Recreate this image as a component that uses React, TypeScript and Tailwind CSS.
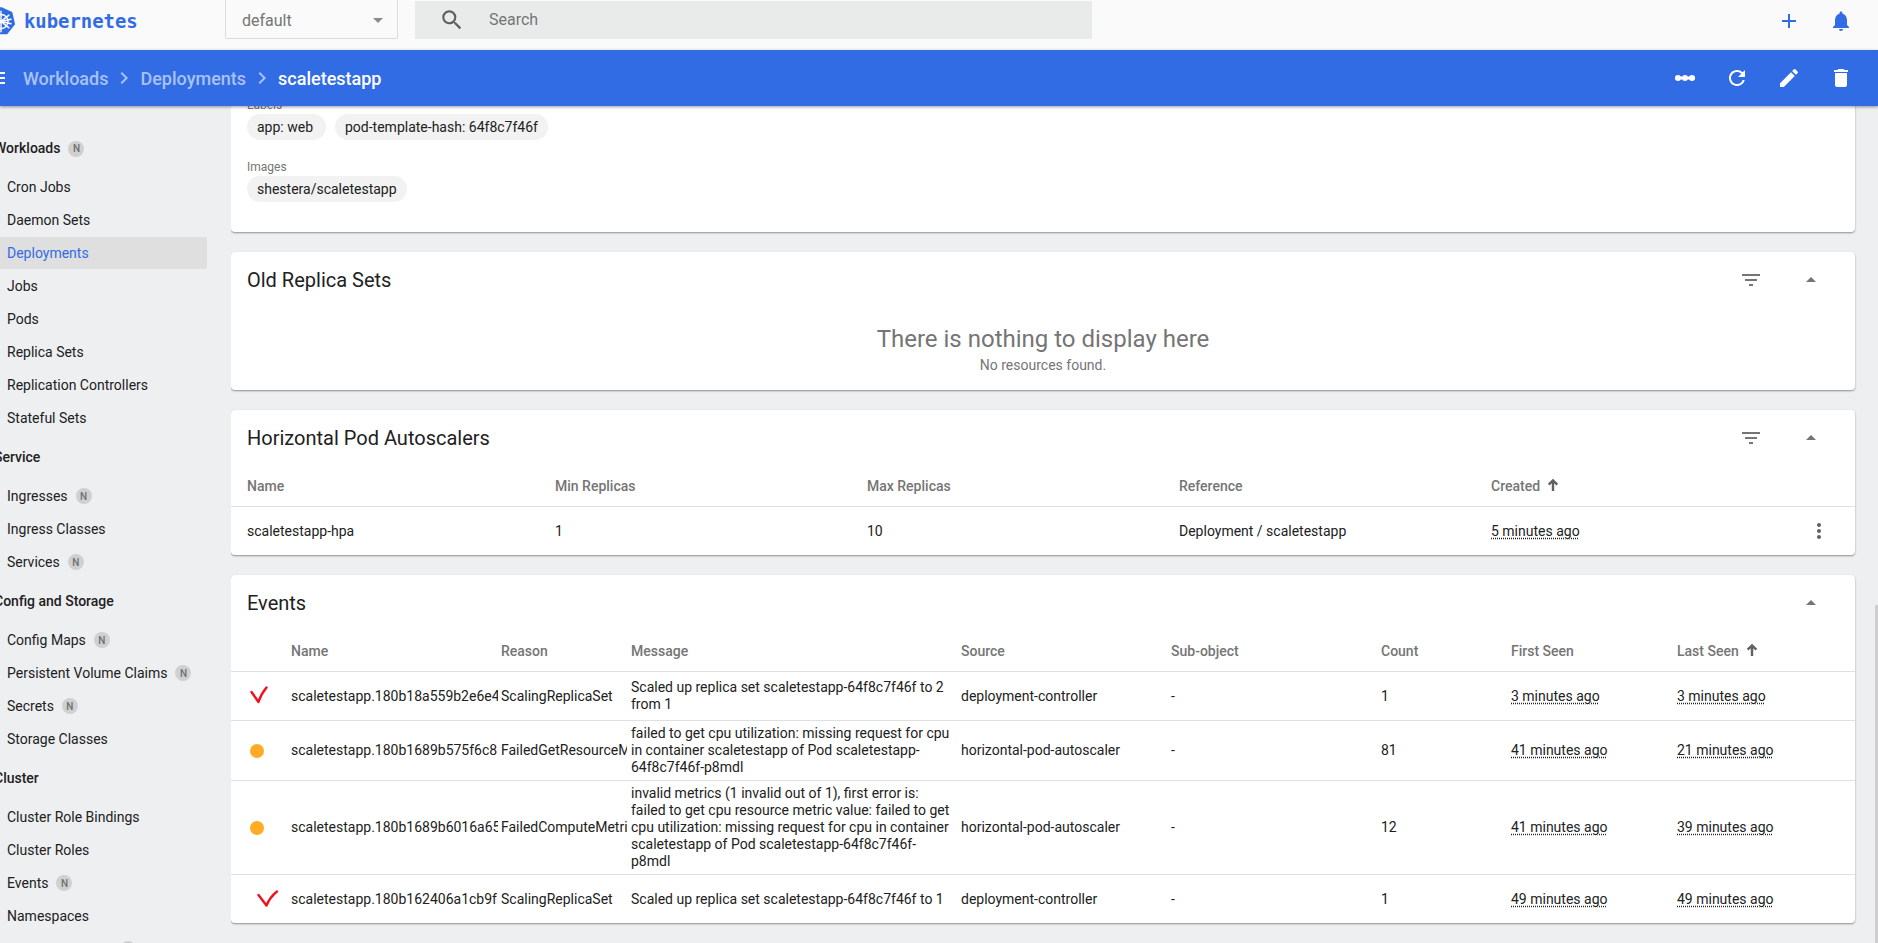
import { MdAdd, MdArrowDropUp, MdChevronRight, MdDelete, MdEdit, MdFilterList, MdMenu, MdMoreVert, MdNotifications, MdRefresh, MdSearch } from 'react-icons/md';

type NavItem = { label: string; ns?: boolean; active?: boolean };

const nav: Array<{ title: string; ns?: boolean; items: NavItem[] }> = [
  {
    title: 'Workloads',
    ns: true,
    items: [
      { label: 'Cron Jobs' },
      { label: 'Daemon Sets' },
      { label: 'Deployments', active: true },
      { label: 'Jobs' },
      { label: 'Pods' },
      { label: 'Replica Sets' },
      { label: 'Replication Controllers' },
      { label: 'Stateful Sets' },
    ],
  },
  {
    title: 'Service',
    items: [{ label: 'Ingresses', ns: true }, { label: 'Ingress Classes' }, { label: 'Services', ns: true }],
  },
  {
    title: 'Config and Storage',
    items: [
      { label: 'Config Maps', ns: true },
      { label: 'Persistent Volume Claims', ns: true },
      { label: 'Secrets', ns: true },
      { label: 'Storage Classes' },
    ],
  },
  {
    title: 'Cluster',
    items: [
      { label: 'Cluster Role Bindings' },
      { label: 'Cluster Roles' },
      { label: 'Events', ns: true },
      { label: 'Namespaces' },
      { label: 'Network Policies', ns: true },
    ],
  },
];

const events = [
  {
    mark: 'check',
    name: 'scaletestapp.180b18a559b2e6e4c1',
    reason: 'ScalingReplicaSet',
    message: 'Scaled up replica set scaletestapp-64f8c7f46f to 2 from 1',
    source: 'deployment-controller',
    count: '1',
    first: '3 minutes ago',
    last: '3 minutes ago',
  },
  {
    mark: 'warn',
    name: 'scaletestapp.180b1689b575f6c8',
    reason: 'FailedGetResourceMetric',
    message: 'failed to get cpu utilization: missing request for cpu in container scaletestapp of Pod scaletestapp-64f8c7f46f-p8mdl',
    source: 'horizontal-pod-autoscaler',
    count: '81',
    first: '41 minutes ago',
    last: '21 minutes ago',
  },
  {
    mark: 'warn',
    name: 'scaletestapp.180b1689b6016a65',
    reason: 'FailedComputeMetricsReplicas',
    message:
      'invalid metrics (1 invalid out of 1), first error is: failed to get cpu resource metric value: failed to get cpu utilization: missing request for cpu in container scaletestapp of Pod scaletestapp-64f8c7f46f-p8mdl',
    source: 'horizontal-pod-autoscaler',
    count: '12',
    first: '41 minutes ago',
    last: '39 minutes ago',
  },
  {
    mark: 'check2',
    name: 'scaletestapp.180b162406a1cb9f',
    reason: 'ScalingReplicaSet',
    message: 'Scaled up replica set scaletestapp-64f8c7f46f to 1',
    source: 'deployment-controller',
    count: '1',
    first: '49 minutes ago',
    last: '49 minutes ago',
  },
];

function Badge() {
  return (
    <span className="ml-2 flex h-4 w-4 items-center justify-center rounded-full bg-[#d0d0d0] text-[10px] font-medium text-[#6f6f6f]">N</span>
  );
}

function Logo() {
  return (
    <svg viewBox="0 0 32 32" className="h-[30px] w-[30px] shrink-0">
      <path d="M16 1 L28 6.5 L31 19.5 L22.6 30 L9.4 30 L1 19.5 L4 6.5 Z" fill="#326ce5" />
      <g stroke="#fff" strokeWidth="1.5" fill="none" strokeLinecap="round">
        <circle cx="16" cy="16.5" r="7.5" />
        <path d="M16 5.5 V27.5 M7.5 9.7 L24.5 23.3 M24.5 9.7 L7.5 23.3 M5.3 18.9 L26.7 14.1 M26.7 18.9 L5.3 14.1" />
      </g>
      <circle cx="16" cy="16.5" r="1.8" fill="#fff" />
    </svg>
  );
}

function CardHeader({ title, filter }: { title: string; filter?: boolean }) {
  return (
    <div className="flex h-[56px] items-center pl-4 pr-[32px] text-[#757575]">
      <div className="flex-1 text-[20px] text-[#212121]">{title}</div>
      {filter && <MdFilterList size={24} className="mr-[36px]" />}
      <MdArrowDropUp size={24} />
    </div>
  );
}

function Chip({ children }: { children: string }) {
  return <span className="flex h-[26px] items-center rounded-[13px] bg-[#f2f2f2] px-[10px] text-[14px] text-[#212121]">{children}</span>;
}

function When({ children }: { children: string }) {
  return <span className="underline decoration-dotted underline-offset-2">{children}</span>;
}

function SortArrow() {
  return (
    <svg viewBox="0 0 24 24" className="h-4 w-4 -translate-y-px fill-none stroke-[#616161]">
      <path d="M12 21V5M5.5 11.5 12 5l6.5 6.5" strokeWidth="3.6" />
    </svg>
  );
}

function Mark({ kind }: { kind: string }) {
  if (kind === 'warn') {
    return <span className="ml-[19px] block h-[14px] w-[14px] rounded-full bg-[#ffab26]" />;
  }
  if (kind === 'check') {
    return (
      <svg viewBox="0 0 18 18" className="-mt-[2px] ml-[19px] h-[18px] w-[18px]">
        <path d="M1.5 6 L8.5 16 Q11 8 16.5 1.5" fill="none" stroke="#f0101e" strokeWidth="2.4" strokeLinecap="round" strokeLinejoin="round" />
      </svg>
    );
  }
  return (
    <svg viewBox="0 0 22 18" className="-mt-[2px] ml-[26px] h-[18px] w-[22px]">
      <path d="M1.5 5 L9.5 15.5 Q13 7 20 1.5" fill="none" stroke="#f0101e" strokeWidth="2.4" strokeLinecap="round" strokeLinejoin="round" />
    </svg>
  );
}

export default function App() {
  return (
    <div className="relative flex h-[943px] w-[1878px] flex-col overflow-hidden bg-[#eeeff1] font-['Roboto',sans-serif] text-[14px] text-[#212121]">
      <header className="flex h-[50px] shrink-0 items-start bg-[#fafafa]">
        <div className="-ml-[14px] mt-[5px] flex w-[239px] items-center gap-2 text-[#326ce5]">
          <Logo />
          <span className="mt-px font-['DejaVu_Sans_Mono',monospace] text-[18.9px] font-bold leading-[30px]">kubernetes</span>
        </div>
        <div className="flex h-[39px] w-[173px] items-center justify-between rounded-b-[2px] border border-t-0 border-[#dcdcdc] pl-4 pr-[14px] pt-[3px] text-[16px] text-[#757575]">
          <span>default</span>
          <span className="h-0 w-0 border-x-[5px] border-t-[5px] border-x-transparent border-t-[#8a8a8a]" />
        </div>
        <div className="ml-[17px] mt-px flex h-[38px] w-[677px] items-center bg-[#e9ebeb] pl-6 text-[16px] text-[#757575]">
          <MdSearch size={26} className="text-[#5f5f5f]" />
          <span className="ml-[24px]">Search</span>
        </div>
        <div className="flex flex-1 items-center justify-end pr-[25px] pt-[9px] text-[#326ce5]">
          <MdAdd size={24} />
          <MdNotifications size={24} className="ml-[28px]" />
        </div>
      </header>

      <div className="relative z-10 flex h-[56px] shrink-0 items-center bg-[#326ce5] shadow-[0_1px_3px_rgba(0,0,0,0.4)] text-[18px] font-medium text-white">
        <div className="-ml-[16px] flex w-[39px] items-center">
          <MdMenu size={24} />
        </div>
        <span className="text-[#a9c2f4]">Workloads</span>
        <MdChevronRight size={24} className="mx-[4px] text-[#a9c2f4]" />
        <span className="text-[#a9c2f4]">Deployments</span>
        <MdChevronRight size={24} className="mx-[4px] text-[#a9c2f4]" />
        <span>scaletestapp</span>
        <div className="ml-auto flex items-center gap-[28px] pr-[25px]">
          <svg viewBox="0 0 24 24" className="h-6 w-6 fill-white">
            <path d="M2 10.5h20v3H2z" />
            <circle cx="5" cy="12" r="2.9" />
            <circle cx="12" cy="12" r="2.9" />
            <circle cx="19" cy="12" r="2.9" />
          </svg>
          <MdRefresh size={24} />
          <MdEdit size={24} />
          <MdDelete size={24} />
        </div>
      </div>

      <div className="flex min-h-0 flex-1">
        <aside className="w-[231px] shrink-0 overflow-hidden pt-[19px]">
          {nav.map((section) => (
            <div key={section.title}>
              <div className="-ml-[6px] mb-[6px] mt-[7px] flex h-[33px] items-center font-medium">
                <span>{section.title}</span>
                {section.ns && <Badge />}
              </div>
              {section.items.map((item) => (
                <div
                  key={item.label}
                  className={
                    item.active
                      ? 'mb-px flex h-[32px] w-[207px] items-center rounded-r-[2px] bg-[#dfdfdf] pl-[7px] text-[#326ce5]'
                      : 'mb-px flex h-[32px] w-[207px] items-center pl-[7px]'
                  }
                >
                  <span>{item.label}</span>
                  {item.ns && <Badge />}
                </div>
              ))}
            </div>
          ))}
        </aside>

        <main className="flex min-w-0 flex-1 flex-col gap-5 overflow-hidden pr-[23px]">
          <section className="-mt-[10px] h-[136px] shrink-0 rounded-[4px] bg-white pl-4 pt-[2px] shadow-[0_1px_2px_rgba(0,0,0,0.4)]">
            <div className="text-[12px] leading-[14px] text-[#757575]">Labels</div>
            <div className="mt-[2px] flex gap-[9px]">
              <span className="flex h-[26px] w-[79px] items-center rounded-[13px] bg-[#f2f2f2] pl-[10px] text-[14px] text-[#212121]">app: web</span>
              <Chip>pod-template-hash: 64f8c7f46f</Chip>
            </div>
            <div className="mt-[19px] text-[12px] leading-[16px] text-[#757575]">Images</div>
            <div className="mt-px flex">
              <Chip>shestera/scaletestapp</Chip>
            </div>
          </section>

          <section className="h-[138px] shrink-0 rounded-[4px] bg-white shadow-[0_1px_2px_rgba(0,0,0,0.4)]">
            <CardHeader title="Old Replica Sets" filter />
            <div className="mt-[16px] text-center text-[24px] leading-[30px] text-[#757575]">There is nothing to display here</div>
            <div className="mt-[2px] text-center text-[14px] leading-[18px] text-[#757575]">No resources found.</div>
          </section>

          <section className="h-[145px] shrink-0 rounded-[4px] bg-white shadow-[0_1px_2px_rgba(0,0,0,0.4)]">
            <CardHeader title="Horizontal Pod Autoscalers" filter />
            <div className="grid h-[41px] grid-cols-[308px_312px_312px_312px_1fr] items-center border-b border-[#e0e0e0] pl-4 font-medium text-[#757575]">
              <span>Name</span>
              <span>Min Replicas</span>
              <span>Max Replicas</span>
              <span>Reference</span>
              <span className="flex items-center gap-[5px]">
                Created <SortArrow />
              </span>
            </div>
            <div className="grid h-[48px] grid-cols-[308px_312px_312px_312px_1fr] items-center pl-4">
              <span>scaletestapp-hpa</span>
              <span>1</span>
              <span>10</span>
              <span>Deployment / scaletestapp</span>
              <span className="flex items-center justify-between pr-[24px]">
                <When>5 minutes ago</When>
                <MdMoreVert size={24} className="text-[#616161]" />
              </span>
            </div>
          </section>

          <section className="h-[348px] shrink-0 rounded-[4px] bg-white shadow-[0_1px_2px_rgba(0,0,0,0.4)]">
            <CardHeader title="Events" />
            <div className="grid h-[41px] grid-cols-[60px_210px_130px_330px_210px_210px_130px_166px_1fr] items-center border-b border-[#e0e0e0] font-medium text-[#757575]">
              <span />
              <span>Name</span>
              <span>Reason</span>
              <span>Message</span>
              <span>Source</span>
              <span>Sub-object</span>
              <span>Count</span>
              <span>First Seen</span>
              <span className="flex items-center gap-[5px]">
                Last Seen <SortArrow />
              </span>
            </div>
            {events.map((ev, i) => (
              <div
                key={ev.name}
                className={
                  i < events.length - 1
                    ? 'grid min-h-[49px] grid-cols-[60px_210px_130px_330px_210px_210px_130px_166px_1fr] items-center border-b border-[#e0e0e0] py-1 leading-[17px]'
                    : 'grid min-h-[49px] grid-cols-[60px_210px_130px_330px_210px_210px_130px_166px_1fr] items-center py-1 leading-[17px]'
                }
              >
                <Mark kind={ev.mark} />
                <span className="mr-[3px] overflow-hidden whitespace-nowrap">{ev.name}</span>
                <span className="mr-[4px] overflow-hidden whitespace-nowrap">{ev.reason}</span>
                <span className="pr-2">{ev.message}</span>
                <span>{ev.source}</span>
                <span>-</span>
                <span>{ev.count}</span>
                <span>
                  <When>{ev.first}</When>
                </span>
                <span>
                  <When>{ev.last}</When>
                </span>
              </div>
            ))}
          </section>
        </main>
      </div>

      <div className="absolute bottom-0 right-0 top-[605px] w-[3px] bg-[#cfcfcf]" />
    </div>
  );
}
